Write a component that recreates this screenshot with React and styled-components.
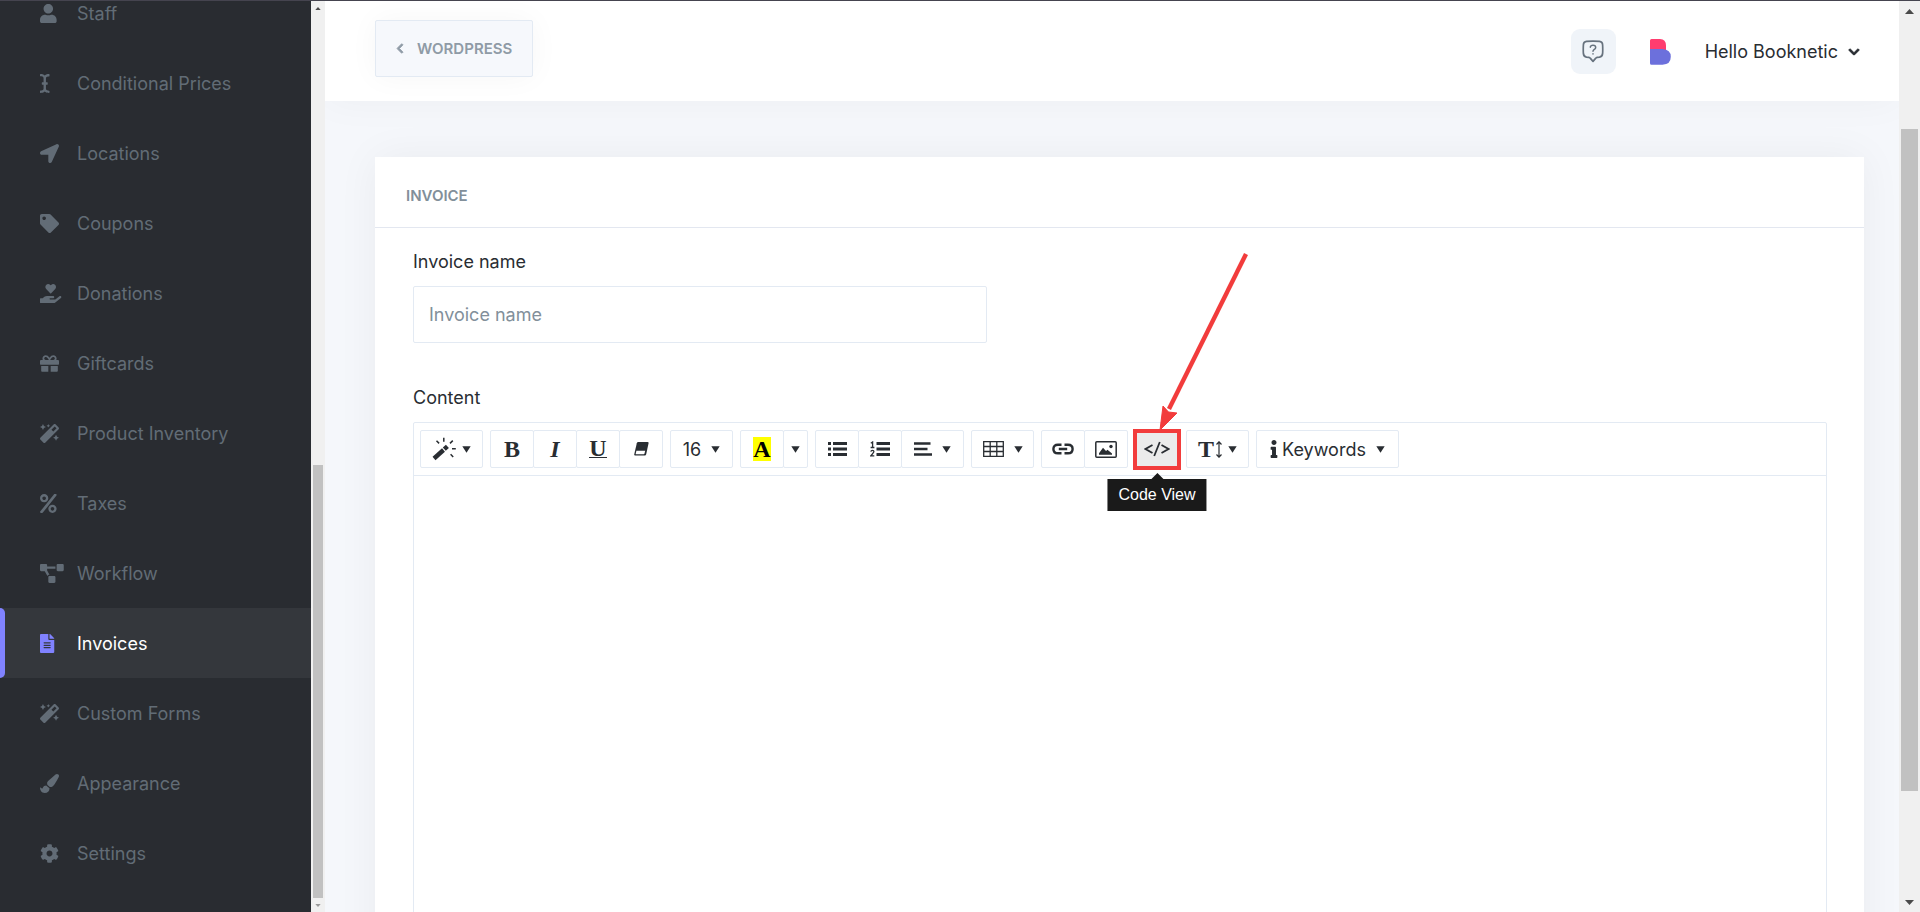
import React, { useState } from "react";
import styled, { createGlobalStyle } from "styled-components";
import {
    FaChevronDown,
    FaChevronLeft,
    FaCog,
    FaFileAlt,
    FaGift,
    FaHandHoldingHeart,
    FaICursor,
    FaInfo,
    FaLocationArrow,
    FaMagic,
    FaPaintBrush,
    FaPercent,
    FaProjectDiagram,
    FaTag,
    FaUser,
} from "react-icons/fa";

const MENU = [
    { label: "Staff", Icon: FaUser },
    { label: "Conditional Prices", Icon: FaICursor },
    { label: "Locations", Icon: FaLocationArrow },
    { label: "Coupons", Icon: FaTag },
    { label: "Donations", Icon: FaHandHoldingHeart },
    { label: "Giftcards", Icon: FaGift },
    { label: "Product Inventory", Icon: FaMagic },
    { label: "Taxes", Icon: FaPercent },
    { label: "Workflow", Icon: FaProjectDiagram },
    { label: "Invoices", Icon: FaFileAlt },
    { label: "Custom Forms", Icon: FaMagic },
    { label: "Appearance", Icon: FaPaintBrush },
    { label: "Settings", Icon: FaCog },
];

function Caret() {
    return (
        <svg width="9" height="7" viewBox="0 0 9 7" fill="currentColor">
            <path d="M0.3 0.3h8.4L4.5 6.7z" />
        </svg>
    );
}

function WandIcon() {
    return (
        <svg width="24" height="24" viewBox="0 0 24 24" fill="none" stroke="currentColor">
            <path d="M2 21.5L11.5 13" strokeWidth="4.4" />
            <path d="M12.3 12.2L15.4 9.4" strokeWidth="4.4" />
            <path
                d="M11.8 0.8v4M4.5 3.8l2.6 2.6M20.8 3.6l-2.8 2.8M20 11.8h3.8M18.6 17.2l2.6 2.8"
                strokeWidth="1.5"
            />
        </svg>
    );
}

function EraserIcon() {
    return (
        <svg width="15" height="16" viewBox="0 0 15 16">
            <path d="M4.2 1h9.4q1.200 0 1 1L12.200 13.200q-.3 1.300-1.400 1.300H1.200q-1.200 0-1-1L2.800 2.200Q3.100 1 4.200 1z" fill="currentColor" />
            <path d="M2.400 9.800h8.800l-.7 2.800q-.2.700-.8.700H2.200q-.6 0-.5-.6z" fill="#fff" />
        </svg>
    );
}

function BulletListIcon() {
    return (
        <svg width="19" height="16" viewBox="0 0 19 16" fill="currentColor">
            <path d="M0 1h3v3H0zM0 6.500h3v3H0zM0 12h3v3H0zM5 1h14v3H5zM5 6.500h14v3H5zM5 12h14v3H5z" />
        </svg>
    );
}

function NumberListIcon() {
    return (
        <svg width="20" height="16" viewBox="0 0 20 16" fill="none" stroke="currentColor">
            <path d="M6.500 2.500H20M6.500 8H20M6.500 13.500H20" strokeWidth="3" />
            <path d="M.8 2.200L2.600 1v5.500M.6 6.500h3.800M.8 10.600q.3-1.300 1.600-1.300 1.500 0 1.500 1.300 0 1-3.200 4.300h3.600" strokeWidth="1.300" />
        </svg>
    );
}

function AlignIcon() {
    return (
        <svg width="18" height="16" viewBox="0 0 18 16" fill="none" stroke="currentColor" strokeWidth="2.600">
            <path d="M0 2.500h16.500M0 8h13.500M0 13.500h18" />
        </svg>
    );
}

function TableIcon() {
    return (
        <svg width="21" height="16" viewBox="0 0 21 16" fill="none" stroke="currentColor" strokeWidth="1.300">
            <path d="M.7.7h19.600v14.600H.7zM.7 5.500h19.600M.7 10.500h19.600M7.200.7v14.600M13.800.7v14.600" />
        </svg>
    );
}

function LinkIcon() {
    return (
        <svg width="22" height="12" viewBox="0 0 22 12" fill="none" stroke="currentColor" strokeWidth="2.400">
            <path d="M9.500 1.700H6Q1.400 1.700 1.400 6T6 10.300h3.500M12.500 1.700H16q4.600 0 4.600 4.300T16 10.300h-3.500M6.800 6h8.400" />
        </svg>
    );
}

function PictureIcon() {
    return (
        <svg width="22" height="17" viewBox="0 0 22 17">
            <rect x=".8" y=".8" width="20.400" height="15.400" rx="1" fill="none" stroke="currentColor" strokeWidth="1.500" />
            <circle cx="16" cy="5.500" r="1.700" fill="currentColor" />
            <path d="M4 13.800v-1.600l4-5.400 3 3.200 1.500-1.300 4.500 3.900v1.200z" fill="currentColor" />
        </svg>
    );
}

function CodeIcon() {
    return (
        <svg width="26" height="16" viewBox="0 0 26 16" fill="none" stroke="currentColor" strokeWidth="1.800">
            <path d="M8.500 4L1.500 8l7 4M17.500 4l7 4-7 4M15.800 1l-5.600 14" />
        </svg>
    );
}

function HeightArrowIcon() {
    return (
        <svg width="6" height="17" viewBox="0 0 6 17" fill="none" stroke="currentColor" strokeWidth="1.200">
            <path d="M3 1v15M.5 3.500L3 .8l2.500 2.700M.5 13.500L3 16.200l2.500-2.700" />
        </svg>
    );
}

function HelpIcon() {
    return (
        <svg width="22" height="23" viewBox="0 0 22 23" fill="none" stroke="#67727e" strokeLinecap="round" strokeLinejoin="round">
            <path
                d="M4.500 1.400Q11 .8 17.500 1.400q3 .3 3.100 3.300.3 5 0 9-.3 3-3.100 3.500l-2.300.2q-1 .1-1.600 1L11 21.400l-2.600-3q-.6-.9-1.600-1l-2.300-.2q-2.800-.5-3.100-3.500-.3-4 0-9 .1-3 3.100-3.300z"
                strokeWidth="1.700"
            />
            <path d="M8.300 7.200q.3-2 2.700-2 2.700 0 2.700 2.200 0 1.100-1.400 1.900-1.300.8-1.300 2M11 13.800v.2" strokeWidth="1.500" />
        </svg>
    );
}

function BrandMark() {
    return (
        <svg width="21" height="26" viewBox="0 0 21 26">
            <path d="M1.500 0H10q6 .3 6 6.500V12H0V1.500Q0 0 1.500 0z" fill="#ff3d6f" />
            <path d="M0 10h12.500q8.300.4 8.300 7.800 0 7.700-8.300 7.900h-11Q0 25.700 0 24.200z" fill="#6c70dc" />
        </svg>
    );
}

function Scrollbar({ wide, before, size, after }) {
    return (
        <ScrollTrack $wide={wide} aria-hidden="true">
            <ScrollArrow $wide={wide}>
                <svg width={wide ? 9 : 6} height={wide ? 5 : 3} viewBox="0 0 9 5">
                    <path d="M0 5L4.500 0 9 5z" fill="#4a4a4a" />
                </svg>
            </ScrollArrow>
            <ScrollSpace $grow={before} />
            <ScrollThumb $grow={size} />
            <ScrollSpace $grow={after} />
            <ScrollArrow $wide={wide}>
                <svg width={wide ? 9 : 6} height={wide ? 5 : 3} viewBox="0 0 9 5">
                    <path d="M0 0h9L4.500 5z" fill={wide ? "#4a4a4a" : "#9a9a9a"} />
                </svg>
            </ScrollArrow>
        </ScrollTrack>
    );
}

function Sidebar() {
    return (
        <SidebarNav>
            {MENU.map(({ label, Icon }) => (
                <MenuLink key={label} href="#" $active={label === "Invoices"}>
                    <MenuIcon>
                        <Icon preserveAspectRatio="xMinYMid meet" />
                    </MenuIcon>
                    {label}
                </MenuLink>
            ))}
        </SidebarNav>
    );
}

function EditorToolbar() {
    return (
        <Toolbar>
            <ButtonGroup>
                <ToolButton $size="menu" aria-label="Style"><WandIcon /><Caret /></ToolButton>
            </ButtonGroup>
            <ButtonGroup>
                <ToolButton aria-label="Bold"><Glyph>B</Glyph></ToolButton>
                <ToolButton aria-label="Italic"><Glyph $italic>I</Glyph></ToolButton>
                <ToolButton aria-label="Underline"><Glyph $underline>U</Glyph></ToolButton>
                <ToolButton aria-label="Remove font style"><EraserIcon /></ToolButton>
            </ButtonGroup>
            <ButtonGroup>
                <ToolButton $size="menu" $spaced aria-label="Font size">16<Caret /></ToolButton>
            </ButtonGroup>
            <ButtonGroup>
                <ToolButton aria-label="Recent color"><Glyph $highlight>A</Glyph></ToolButton>
                <ToolButton $size="caret" aria-label="More colors"><Caret /></ToolButton>
            </ButtonGroup>
            <ButtonGroup>
                <ToolButton aria-label="Unordered list"><BulletListIcon /></ToolButton>
                <ToolButton aria-label="Ordered list"><NumberListIcon /></ToolButton>
                <ToolButton $size="menu" $spaced aria-label="Paragraph"><AlignIcon /><Caret /></ToolButton>
            </ButtonGroup>
            <ButtonGroup>
                <ToolButton $size="menu" $spaced aria-label="Table"><TableIcon /><Caret /></ToolButton>
            </ButtonGroup>
            <ButtonGroup>
                <ToolButton aria-label="Link"><LinkIcon /></ToolButton>
                <ToolButton aria-label="Picture"><PictureIcon /></ToolButton>
            </ButtonGroup>
            <ButtonGroup>
                <ToolButton $hovered aria-label="Code View"><CodeIcon /></ToolButton>
                <Frame />
                <Pointer width="90" height="180" viewBox="0 0 90 180">
                    <path d="M87 3L10 158" stroke="#f23c3c" strokeWidth="4.400" />
                    <path d="M1 179L4 155l5.500 6L18 162z" fill="#f23c3c" stroke="#f23c3c" />
                </Pointer>
                <Tooltip role="tooltip">Code View</Tooltip>
            </ButtonGroup>
            <ButtonGroup>
                <ToolButton $size="menu" aria-label="Line height">
                    <TextHeight>
                        <Glyph>T</Glyph>
                        <HeightArrowIcon />
                    </TextHeight>
                    <Caret />
                </ToolButton>
            </ButtonGroup>
            <ButtonGroup>
                <ToolButton $size="wide" $spaced>
                    <KeywordsLabel>
                        <FaInfo />
                        Keywords
                    </KeywordsLabel>
                    <Caret />
                </ToolButton>
            </ButtonGroup>
        </Toolbar>
    );
}

function App() {
    const [invoiceName, setInvoiceName] = useState("");
    const [content, setContent] = useState("");

    return (
        <>
            <GlobalStyle />
            <Shell>
                <Sidebar />
                <Scrollbar before={450} size={433} after={0} />

                <Main>
                    <Header>
                        <BackButton>
                            <FaChevronLeft />
                            WORDPRESS
                        </BackButton>
                        <HeaderActions>
                            <HelpButton aria-label="Help">
                                <HelpIcon />
                            </HelpButton>
                            <BrandMark />
                            <AccountButton>
                                Hello Booknetic
                                <FaChevronDown />
                            </AccountButton>
                        </HeaderActions>
                    </Header>

                    <Card>
                        <CardTitle>INVOICE</CardTitle>
                        <CardBody>
                            <Label htmlFor="invoice-name">Invoice name</Label>
                            <NameInput
                                id="invoice-name"
                                placeholder="Invoice name"
                                value={invoiceName}
                                onChange={(e) => setInvoiceName(e.target.value)}
                            />
                            <Label htmlFor="invoice-content">Content</Label>
                            <Editor>
                                <EditorToolbar />
                                <EditorArea
                                    id="invoice-content"
                                    value={content}
                                    onChange={(e) => setContent(e.target.value)}
                                />
                            </Editor>
                        </CardBody>
                    </Card>
                </Main>
                <Scrollbar wide before={108} size={662} after={101} />
            </Shell>
        </>
    );
}

export default App;

const GlobalStyle = createGlobalStyle`
    * {
        box-sizing: border-box;
    }

    body {
        margin: 0;
        overflow: hidden;
        color: #292d32;
        font-family: Inter, "Liberation Sans", sans-serif;
        font-size: 18px;
    }

    button, input, textarea {
        font: inherit;
        color: inherit;
    }

    svg {
        flex: none;
    }
`;

const Shell = styled.div`
    display: flex;
    height: 100vh;
    border-top: 1px solid #45444f;
    background-color: #f5f7fb;
`;

/* The menu is scrolled to its end, so the links hang from the bottom. */
const SidebarNav = styled.nav`
    flex: none;
    display: flex;
    flex-direction: column;
    justify-content: flex-end;
    width: 311px;
    padding-bottom: 24px;
    overflow: hidden;
    background-color: #292c31;
`;

const MenuLink = styled.a`
    flex: none;
    display: flex;
    align-items: center;
    height: 70px;
    background-color: ${({ $active }) => ($active ? "#34373c" : "transparent")};
    color: ${({ $active }) => ($active ? "#fff" : "#626c76")};
    text-decoration: none;

    &::before {
        content: "";
        width: 5px;
        height: 100%;
        margin-right: 35px;
        border-radius: 0 5px 5px 0;
        background-color: ${({ $active }) => ($active ? "#8082ff" : "transparent")};
    }

    svg {
        color: ${({ $active }) => ($active ? "#8082ff" : "#626c76")};
    }
`;

const MenuIcon = styled.span`
    display: flex;
    width: 37px;

    svg {
        width: 24px;
        height: 19px;
    }
`;

const ScrollTrack = styled.div`
    flex: none;
    display: flex;
    flex-direction: column;
    width: ${({ $wide }) => ($wide ? 21 : 14)}px;
    padding: 0 2px;
    background-color: #f0f0f0;
`;

const ScrollArrow = styled.div`
    flex: none;
    display: flex;
    align-items: center;
    justify-content: center;
    height: ${({ $wide }) => ($wide ? 20 : 14)}px;
`;

const ScrollSpace = styled.div`
    flex: ${({ $grow }) => $grow} 0 0;
`;

const ScrollThumb = styled(ScrollSpace)`
    background-color: #c1c1c1;
`;

const Main = styled.main`
    flex: 1;
    min-width: 0;
    overflow: hidden;
`;

const Header = styled.header`
    display: flex;
    justify-content: space-between;
    height: 100px;
    padding: 19px 39px 0 50px;
    background-color: #fff;
    box-shadow: 0 0 40px rgba(0, 0, 0, 0.04);
`;

const BackButton = styled.button`
    display: flex;
    align-items: center;
    gap: 13px;
    height: 57px;
    padding: 0 20px;
    border: 1px solid #e3eaf3;
    border-radius: 2px;
    background-color: #f6f8fc;
    box-shadow: 0 0 30px rgba(0, 0, 0, 0.04);
    color: #8f9ba6;
    font-size: 15px;
    font-weight: 600;

    svg {
        width: 8px;
        height: 11px;
        stroke: currentColor;
        stroke-width: 40px;
    }
`;

const HeaderActions = styled.div`
    display: flex;
    align-items: center;
    height: 63px;
    gap: 34px;
`;

const HelpButton = styled.button`
    display: flex;
    align-items: center;
    justify-content: center;
    width: 45px;
    height: 45px;
    padding: 0;
    border: 0;
    border-radius: 9px;
    background-color: #f0f4f9;
`;

const AccountButton = styled.button`
    display: flex;
    align-items: center;
    gap: 10px;
    padding: 0;
    border: 0;
    background: none;

    svg {
        width: 12px;
        height: 12px;
        stroke: currentColor;
        stroke-width: 40px;
    }
`;

const Card = styled.section`
    margin: 56px 35px 0 50px;
    background-color: #fff;
    box-shadow: 0 0 40px rgba(0, 0, 0, 0.05);
`;

const CardTitle = styled.h1`
    display: flex;
    align-items: center;
    height: 71px;
    margin: 0;
    padding: 6px 31px 0;
    border-bottom: 1px solid #e3e7f0;
    color: #828f9a;
    font-size: 15px;
    font-weight: 600;
`;

const CardBody = styled.div`
    padding: 22px 37px 40px 38px;
`;

const Label = styled.label`
    display: block;
    padding-bottom: 12px;
    line-height: 24px;
`;

const NameInput = styled.input`
    display: block;
    width: calc(100% * 5 / 12 - 15px);
    height: 57px;
    margin-bottom: 43px;
    padding: 0 15px;
    border: 1px solid #e3eaf3;
    border-radius: 2px;
    outline: 0;

    &::placeholder {
        color: #828f9a;
        opacity: 1;
    }
`;

const Editor = styled.div`
    border: 1px solid #e3eaf3;
    border-radius: 2px;
`;

const Toolbar = styled.div`
    display: flex;
    gap: 7px;
    padding: 7px 6px;
    border-bottom: 1px solid #e3eaf3;
`;

const ButtonGroup = styled.div`
    position: relative;
    display: flex;
`;

const buttonWidths = {
    icon: 44,
    menu: 63,
    caret: 25,
    wide: 143,
};

const ToolButton = styled.button`
    display: flex;
    align-items: center;
    justify-content: center;
    gap: ${({ $spaced }) => ($spaced ? 10 : 6)}px;
    width: ${({ $size = "icon" }) => buttonWidths[$size]}px;
    height: 38px;
    padding: 0;
    border: 1px solid #e3eaf3;
    border-radius: 2px;
    background-color: ${({ $hovered }) => ($hovered ? "#ebebeb" : "#fff")};

    & + & {
        margin-left: -1px;
    }
`;

const Glyph = styled.span`
    font-family: "Liberation Serif", serif;
    font-size: 24px;
    font-weight: 700;
    line-height: 24px;
    font-style: ${({ $italic }) => ($italic ? "italic" : "normal")};
    ${({ $underline }) =>
        $underline &&
        `
        line-height: 17px;
        border-bottom: 1px solid currentColor;
    `}
    ${({ $highlight }) => $highlight && "background-color: #ff0; color: #000;"}
`;

const TextHeight = styled.span`
    display: flex;
    align-items: center;
    gap: 2px;
`;

const KeywordsLabel = styled.span`
    display: flex;
    align-items: center;
    gap: 4px;

    svg {
        width: 8px;
        height: 18px;
    }
`;

const Frame = styled.span`
    position: absolute;
    inset: -1px -2px -2px;
    border: 4px solid #f23c3c;
    pointer-events: none;
`;

const Pointer = styled.svg`
    position: absolute;
    bottom: 37px;
    left: 24px;
    pointer-events: none;
`;

const Tooltip = styled.span`
    position: absolute;
    top: 49px;
    left: 50%;
    transform: translateX(-50%);
    padding: 7px 11px;
    background-color: #1a1a1a;
    color: #fff;
    font-family: "Liberation Sans", Arial, sans-serif;
    font-size: 16px;
    line-height: 18px;
    white-space: nowrap;

    &::before {
        content: "";
        position: absolute;
        bottom: 100%;
        left: 50%;
        margin-left: -6px;
        border: 6px solid transparent;
        border-top-width: 0;
        border-bottom-color: #1a1a1a;
    }
`;

const EditorArea = styled.textarea`
    display: block;
    width: 100%;
    height: 600px;
    padding: 10px;
    border: 0;
    outline: 0;
    resize: none;
    background: none;
`;
